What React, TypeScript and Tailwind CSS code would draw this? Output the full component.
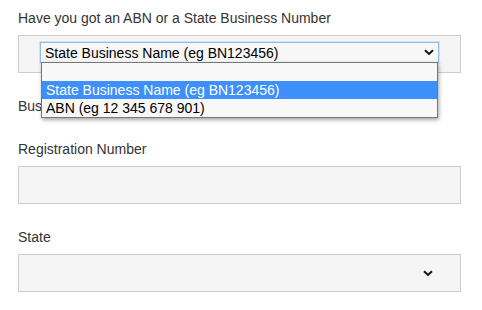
import React from "react";

const Chevron = () => (
  <svg width="10" height="7" viewBox="0 0 10 7" className="block">
    <path d="M1 1.2 L5 5 L9 1.2" fill="none" stroke="#111" strokeWidth="1.9" />
  </svg>
);

export default function App() {
  return (
    <div
      className="w-[482px] h-[310px] bg-white text-[14px] text-[#333]"
      style={{ fontFamily: '"Liberation Sans", Arial, sans-serif' }}
    >
      <div className="pl-[18px] pt-[8px] w-[461px] flex flex-col">
        <label className="h-[20px] leading-[20px]">Have you got an ABN or a State Business Number</label>
        <div className="mt-[7px] h-[38px] border border-[#cccccc] bg-[#f5f5f5] pl-[21px] pr-[21px] pt-[6px]">
          <div className="relative">
            <div className="h-[21px] border border-[#93b9e8] shadow-[0_0_0_1px_#d3e3f7] bg-[#f7f7f7] flex items-center pl-[4px] pr-[4px] text-black">
              <span className="flex-1 leading-[18px]">State Business Name (eg BN123456)</span>
              <Chevron />
            </div>
            <div className="absolute left-[1px] top-[20px] w-[397px] border border-[#767676] bg-[#f8f8f8] shadow-[1px_2px_4px_rgba(0,0,0,0.35)] text-black z-10">
              <div className="h-[18px]" />
              <div className="h-[18px] leading-[18px] pl-[4px] bg-[#3d8ffc] text-white">State Business Name (eg BN123456)</div>
              <div className="h-[18px] leading-[18px] pl-[4px]">ABN (eg 12 345 678 901)</div>
            </div>
          </div>
        </div>

        <label className="mt-[23px] h-[20px] leading-[20px]">Business Name</label>

        <label className="mt-[23px] h-[20px] leading-[20px]">Registration Number</label>
        <div className="mt-[7px] h-[38px] border border-[#cccccc] bg-[#f5f5f5]" />

        <label className="mt-[23px] h-[20px] leading-[20px]">State</label>
        <div className="mt-[7px] h-[38px] border border-[#cccccc] bg-[#f5f5f5] flex items-center justify-end pr-[27px]">
          <Chevron />
        </div>
      </div>
    </div>
  );
}
